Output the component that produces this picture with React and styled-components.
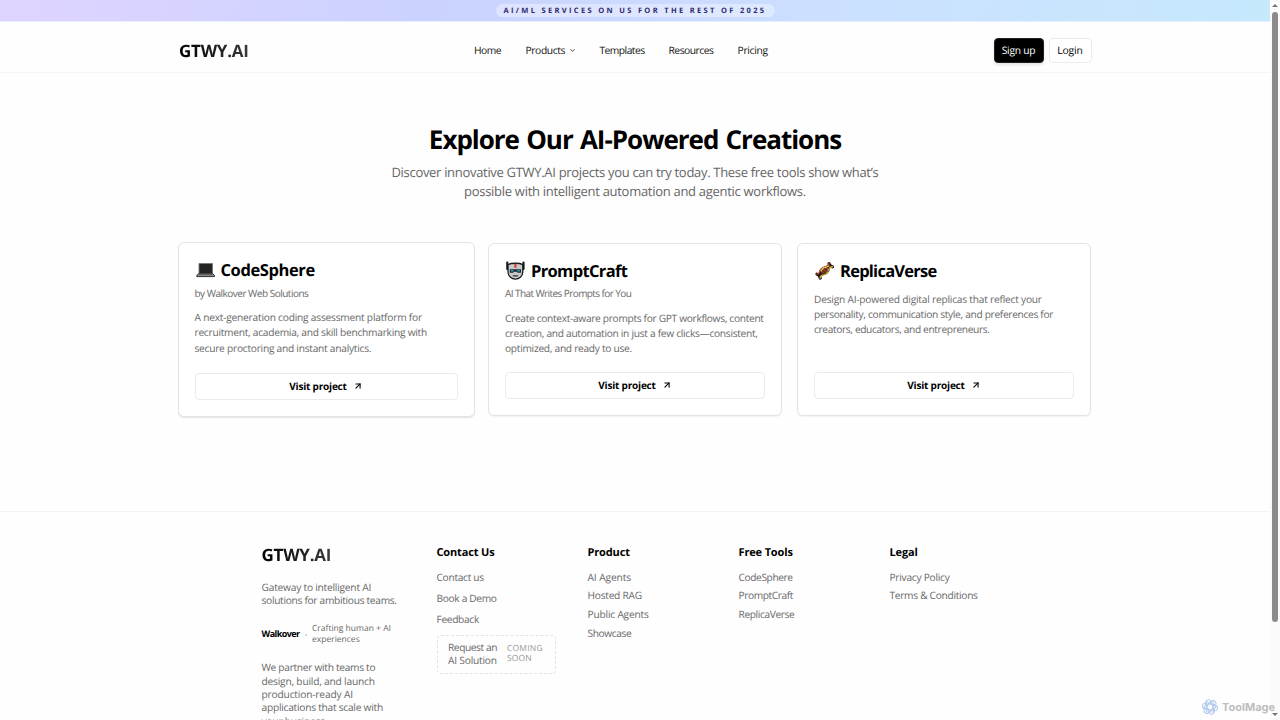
import React from "react";
import styled, { createGlobalStyle, css } from "styled-components";
import { ChevronDown, ArrowUpRight } from "lucide-react";

const Global = createGlobalStyle`
  * { box-sizing: border-box; }
  html, body { margin: 0; height: 720px; overflow: hidden; }
  body { background: #fefefe; font-family: "Open Sans", "Noto Sans", sans-serif; text-rendering: geometricPrecision; color: #000; }
  h1, h2, h3, p, ul { margin: 0; padding: 0; }
  ul { list-style: none; }
  a { color: inherit; text-decoration: none; }
`;

const Screen = styled.div`
  position: relative;
  display: flex;
  width: 1280px;
  height: 720px;
  overflow: hidden;
`;
const Page = styled.div`
  width: 1270px;
  height: 720px;
  overflow: hidden;
`;
const Line = styled.span`
  display: block;
  white-space: nowrap;
  letter-spacing: ${(p) => p.$ls || 0}px;
`;

const Banner = styled.div`
  height: 22px;
  display: flex;
  justify-content: center;
  align-items: flex-start;
  padding-top: 4px;
  background: linear-gradient(100deg, #dfd4ff 0%, #cbd2ff 34%, #cbe0ff 66%, #c6e9fc 100%);
  border-bottom: 1px solid #e6effc;
`;
const BannerPill = styled.div`
  width: 279px;
  height: 13px;
  border-radius: 7px;
  background: rgba(255, 255, 255, 0.36);
  padding-left: 8px;
  font-size: 7.5px;
  font-weight: 700;
  line-height: 14px;
  color: #2e2a6e;
`;

const Header = styled.header`
  height: 51px;
  border-bottom: 1px solid #f5f5f5;
  padding: 7px 178.5px 0 179px;
  display: grid;
  grid-template-columns: 295px 1fr auto;
  align-items: center;
`;
const Logo = styled.a`
  display: block;
  width: max-content;
  font-size: 17px;
  line-height: 24px;
  font-weight: 700;
  background: linear-gradient(90deg, #000, #3a3a3a);
  background-clip: text;
  -webkit-background-clip: text;
  color: transparent;
`;
const Nav = styled.nav`
  display: flex;
  font-size: 10.3px;
  line-height: 16px;
  color: #111;
`;
const NavItem = styled.a`
  display: flex;
  align-items: center;
  gap: 4px;
  width: ${(p) => p.$w}px;
`;
const Actions = styled.div`
  display: flex;
  gap: 5px;
`;
const Button = styled.a`
  display: flex;
  align-items: center;
  justify-content: center;
  width: ${(p) => p.$w}px;
  height: 25px;
  border-radius: 4px;
  border: 1px solid #ebebeb;
  font-size: 10.3px;
  background: #fff;
  ${(p) =>
    p.$primary &&
    css`
      background: #000;
      border-color: #222;
      color: #fff;
      font-weight: 500;
      box-shadow: 0 2px 3px rgba(0, 0, 0, 0.1);
    `}
`;

const Hero = styled.section`
  padding-top: 48px;
  text-align: center;
  display: flex;
  flex-direction: column;
  align-items: center;
`;
const Title = styled.h1`
  font-size: 26px;
  line-height: 36px;
  font-weight: 700;
  word-spacing: 1.5px;
`;
const Lead = styled.p`
  margin-top: 6px;
  font-size: 13px;
  line-height: 19px;
  color: #666;
  display: flex;
  flex-direction: column;
  align-items: center;
`;

const Cards = styled.section`
  display: grid;
  grid-template-columns: 297px 294px 294px;
  column-gap: 13.5px;
  padding: 41px 0 0 177.5px;
  align-items: center;
  & > :last-child { margin-left: 1.500px; width: 294px; }
`;
const Card = styled.article`
  height: ${(p) => (p.$active ? 174.5 : 172.5)}px;
  border: 1px solid #e4e4e4;
  border-radius: 6px;
  background: #fff;
  padding: ${(p) => (p.$active ? 14.5 : 14)}px 16px 16px;
  display: flex;
  flex-direction: column;
  box-shadow: ${(p) => (p.$active ? "0 1px 1px rgba(0,0,0,.1)" : "0 1px 1px rgba(0,0,0,.05)")};
`;
const CardHead = styled.h2`
  display: flex;
  align-items: center;
  gap: 5px;
  height: 24px;
  font-size: 16.5px;
  font-weight: 700;
  svg { flex: none; }
`;
const Byline = styled.p`
  margin-top: 3px;
  font-size: 10px;
  line-height: 16px;
  color: #686868;
`;
const Description = styled.p`
  margin-top: 9.5px;
  font-size: 10.2px;
  line-height: 15.35px;
  color: #686868;
`;
const Visit = styled.a`
  margin-top: auto;
  height: 27px;
  border: 1px solid #ebebeb;
  border-radius: 4px;
  display: flex;
  align-items: center;
  justify-content: center;
  gap: 6px;
  font-size: 10px;
  font-weight: 700;
`;

const Footer = styled.footer`
  margin-top: 94.5px;
  height: 240px;
  border-top: 1px solid #f3f3f3;
  padding: 32px 0 0 261.5px;
  display: grid;
  grid-template-columns: 175px 151px 151px 151px 151px;
`;
const Brand = styled.div`
  margin-top: -1px;
  font-size: 10.2px;
  line-height: 13.35px;
  color: #686868;
`;
const Tagline = styled.p`
  margin-top: 14px;
`;
const Credit = styled.div`
  display: flex;
  align-items: center;
  margin: 16.5px 0 16px;
  height: 21px;
  font-size: 8.5px;
  line-height: 10.7px;
  strong { width: 50.5px; color: #000; font-size: 9px; }
`;
const Dot = styled.i`
  display: block;
  flex: none;
  width: 2px;
  height: 2px;
  margin: 0 5px 0 -7px;
  border-radius: 1px;
  background: #ccc;
`;
const Column = styled.div`
  font-size: 10.2px;
  line-height: 13.35px;
  color: #686868;
`;
const ColumnTitle = styled.h3`
  font-size: 11px;
  line-height: 18px;
  margin-bottom: 8.7px;
  font-weight: 700;
  color: #000;
`;
const Links = styled.ul`
  display: flex;
  flex-direction: column;
  gap: ${(p) => p.$gap}px;
`;
const Soon = styled.div`
  margin-top: 8px;
  width: 119px;
  height: 39px;
  border: 1px dashed #e3e3e3;
  border-radius: 4px;
  display: flex;
  align-items: center;
  padding-left: 10.5px;
  & > :first-child { width: 59px; }
  small { font-size: 8.5px; line-height: 10.7px; color: #989898; }
`;

const Scrollbar = styled.div`
  width: 10px;
  background: #fbfbfb;
  display: flex;
  flex-direction: column;
  align-items: center;
  padding: 4px 0 4px;
`;
const Arrow = styled.i`
  width: 0;
  height: 0;
  border: 3px solid transparent;
  ${(p) =>
    p.$down
      ? css`border-top-color: #777; border-bottom: 0; margin-top: auto;`
      : css`border-bottom-color: #777; border-top: 0;`}
`;
const Thumb = styled.div`
  margin-top: 5px;
  width: 6px;
  height: 610px;
  border-radius: 3px;
  background: #8b8b8b;
`;
const Watermark = styled.div`
  position: absolute;
  left: 1202px;
  top: 699px;
  display: flex;
  align-items: center;
  gap: 4px;
  font-family: Inter, sans-serif;
  font-size: 11px;
  line-height: 16px;
  font-weight: 700;
  color: #bdbdbd;
`;

const Laptop = () => (
  <svg width="21" height="21" viewBox="0 0 21 21">
    <path d="M4 4.5h13.500v10H4z" fill="#242426" stroke="#777" strokeWidth=".9" />
    <path d="M3.300 14.800h14.600l1.600 1.800v1H1.800v-1z" fill="#8d8d8d" stroke="#222" strokeWidth=".9" />
    <path d="M4.200 15.700h12.800" stroke="#555" strokeWidth=".6" />
  </svg>
);
const Robot = () => (
  <svg width="21" height="21" viewBox="0 0 21 21">
    <path d="M2.300 2.500v6.500M18.500 2.500v6.500" stroke="#17191a" strokeWidth="2.200" strokeLinecap="round" />
    <path d="M3 4.600C6 2.800 14.800 2.800 17.800 4.600v7.400c0 4.300-4 7.100-7.400 7.100S3 16.300 3 12z" fill="#c6cacd" stroke="#17191a" strokeWidth="1.300" />
    <path d="M9.300 3.800h2.200v4H9.300z" fill="#d7442d" />
    <path d="M4.800 9.200h11.200v3.500h-3.300l-.9-.9H9l-.9.900H4.800z" fill="#202528" />
    <path d="M6 9.900h2.400v1.700H6zM12.400 9.900h2.400v1.700h-2.400z" fill="#2ca9cf" />
    <path d="M7.500 15.300h5.800l-.7 1.300H8.200z" fill="#303030" />
  </svg>
);
const Dna = () => (
  <svg width="21" height="21" viewBox="0 0 21 21" fill="none" strokeLinecap="round">
    <path d="M15 3.600c.3 2 1.500 3 3.500 3.200M3 14.200c2 .5 3 1.800 3.200 4" stroke="#1d1511" strokeWidth="3.200" />
    <path d="M6 14.500c-1-4 3-8 9-8 .8 4.800-2.800 9-9 8z" fill="#8a3a28" stroke="#1d1511" strokeWidth="1.800" />
    <path d="M15 3c-.2 5-7 2.500-8.800 7.500-.8 2.300-1.500 3.300-3.200 3.700" stroke="#c24b34" strokeWidth="1.300" />
    <path d="M18.500 6.700c-5-.5-2.500 5.500-7.200 7.500-2.500 1-5 .8-5.200 3.800" stroke="#d2a541" strokeWidth="1.400" />
    <path d="M7.200 11c1.500-4.500 5-3 7.800-5" stroke="#e0ba52" strokeWidth="1.300" />
    <path d="M8.300 10l3.600 3.600M10.200 8.300l3 3M7 12.200l2 2" stroke="#33201a" strokeWidth=".8" />
  </svg>
);
const MageMark = () => (
  <svg width="16" height="16" viewBox="0 0 16 16" fill="none" stroke="#a9c4ec" strokeWidth="1">
    {[0, 60, 120, 180, 240, 300].map((a) => (
      <path key={a} transform={`rotate(${a} 8 8)`} d="M3.600 7V3.900a3 3 0 0 1 5.100-2.400M5.300 8.800V5.200l3.300-1.900a3 3 0 0 1 3.300.2" />
    ))}
  </svg>
);

const projects = [
  {
    name: "CodeSphere", Icon: Laptop, ls: -0.4, by: "by Walkover Web Solutions", byLs: -0.5, active: true,
    lines: [["A next-generation coding assessment platform for", -0.22], ["recruitment, academia, and skill benchmarking with", -0.26], ["secure proctoring and instant analytics.", -0.25]],
  },
  {
    name: "PromptCraft", Icon: Robot, ls: -0.65, by: "AI That Writes Prompts for You", byLs: -0.58,
    lines: [["Create context-aware prompts for GPT workflows, content", -0.32], ["creation, and automation in just a few clicks—consistent,", -0.29], ["optimized, and ready to use.", -0.28]],
  },
  {
    name: "ReplicaVerse", Icon: Dna, ls: -0.75,
    lines: [["Design AI-powered digital replicas that reflect your", -0.22], ["personality, communication style, and preferences for", -0.32], ["creators, educators, and entrepreneurs.", -0.36]],
  },
];
const contact = [["Contact us", -0.3], ["Book a Demo", -0.34], ["Feedback", -0.33]];
const columns = [
  ["Product", [["AI Agents", -0.1], ["Hosted RAG", -0.25], ["Public Agents", -0.2], ["Showcase", -0.4]]],
  ["Free Tools", [["CodeSphere", -0.4], ["PromptCraft", -0.42], ["ReplicaVerse", -0.38]]],
  ["Legal", [["Privacy Policy", -0.26], ["Terms & Conditions", -0.3]]],
];
const about = [
  ["We partner with teams to", -0.3],
  ["design, build, and launch", -0.2],
  ["production-ready AI", -0.17],
  ["applications that scale with", -0.25],
  ["your business.", -0.2],
];

const LinkList = ({ items, gap }) => (
  <Links $gap={gap}>
    {items.map(([t, ls]) => <li key={t}><Line $ls={ls}>{t}</Line></li>)}
  </Links>
);

export default function App() {
  return (
    <Screen>
      <Global />
      <Page>
        <Banner>
          <BannerPill><Line $ls={2.33}>AI/ML SERVICES ON US FOR THE REST OF 2025</Line></BannerPill>
        </Banner>
        <Header>
          <Logo><Line $ls={-0.25}>GTWY.AI</Line></Logo>
          <Nav>
            <NavItem $w={51.5}><Line $ls={-0.5}>Home</Line></NavItem>
            <NavItem $w={74}><Line $ls={-0.4}>Products</Line><ChevronDown size={7} color="#333" strokeWidth={3} /></NavItem>
            <NavItem $w={69}><Line $ls={-0.55}>Templates</Line></NavItem>
            <NavItem $w={69}><Line $ls={-0.5}>Resources</Line></NavItem>
            <NavItem $w={40}><Line $ls={-0.3}>Pricing</Line></NavItem>
          </Nav>
          <Actions>
            <Button $w={50} $primary><Line $ls={-0.25}>Sign up</Line></Button>
            <Button $w={43}><Line $ls={-0.1}>Login</Line></Button>
          </Actions>
        </Header>
        <Hero>
          <Title><Line $ls={-1.02}>Explore Our AI-Powered Creations</Line></Title>
          <Lead>
            <Line $ls={-0.31}>Discover innovative GTWY.AI projects you can try today. These free tools show what’s</Line>
            <Line $ls={-0.29}>possible with intelligent automation and agentic workflows.</Line>
          </Lead>
        </Hero>
        <Cards>
          {projects.map(({ name, Icon, ls, by, byLs, lines, active }) => (
            <Card key={name} $active={active}>
              <CardHead><Icon /><Line $ls={ls}>{name}</Line></CardHead>
              {by && <Byline><Line $ls={byLs}>{by}</Line></Byline>}
              <Description>{lines.map(([t, s]) => <Line key={t} $ls={s}>{t}</Line>)}</Description>
              <Visit><Line $ls={-0.2}>Visit project</Line><ArrowUpRight size={10} strokeWidth={2.6} /></Visit>
            </Card>
          ))}
        </Cards>
        <Footer>
          <Brand>
            <Logo><Line $ls={-0.25}>GTWY.AI</Line></Logo>
            <Tagline>
              <Line $ls={-0.22}>Gateway to intelligent AI</Line>
              <Line $ls={-0.3}>solutions for ambitious teams.</Line>
            </Tagline>
            <Credit>
              <strong><Line $ls={-0.55}>Walkover</Line></strong>
              <Dot />
              <div><Line>Crafting human + AI</Line><Line>experiences</Line></div>
            </Credit>
            <p>{about.map(([t, ls]) => <Line key={t} $ls={ls}>{t}</Line>)}</p>
          </Brand>
          <Column>
            <ColumnTitle><Line $ls={-0.15}>Contact Us</Line></ColumnTitle>
            <LinkList items={contact} gap={8} />
            <Soon>
              <div><Line $ls={-0.42}>Request an</Line><Line $ls={-0.2}>AI Solution</Line></div>
              <small><Line $ls={0.2}>COMING</Line><Line $ls={0.1}>SOON</Line></small>
            </Soon>
          </Column>
          {columns.map(([title, items]) => (
            <Column key={title}>
              <ColumnTitle><Line $ls={-0.15}>{title}</Line></ColumnTitle>
              <LinkList items={items} gap={5.35} />
            </Column>
          ))}
        </Footer>
      </Page>
      <Scrollbar><Arrow /><Thumb /><Arrow $down /></Scrollbar>
      <Watermark><MageMark /><Line>ToolMage</Line></Watermark>
    </Screen>
  );
}
